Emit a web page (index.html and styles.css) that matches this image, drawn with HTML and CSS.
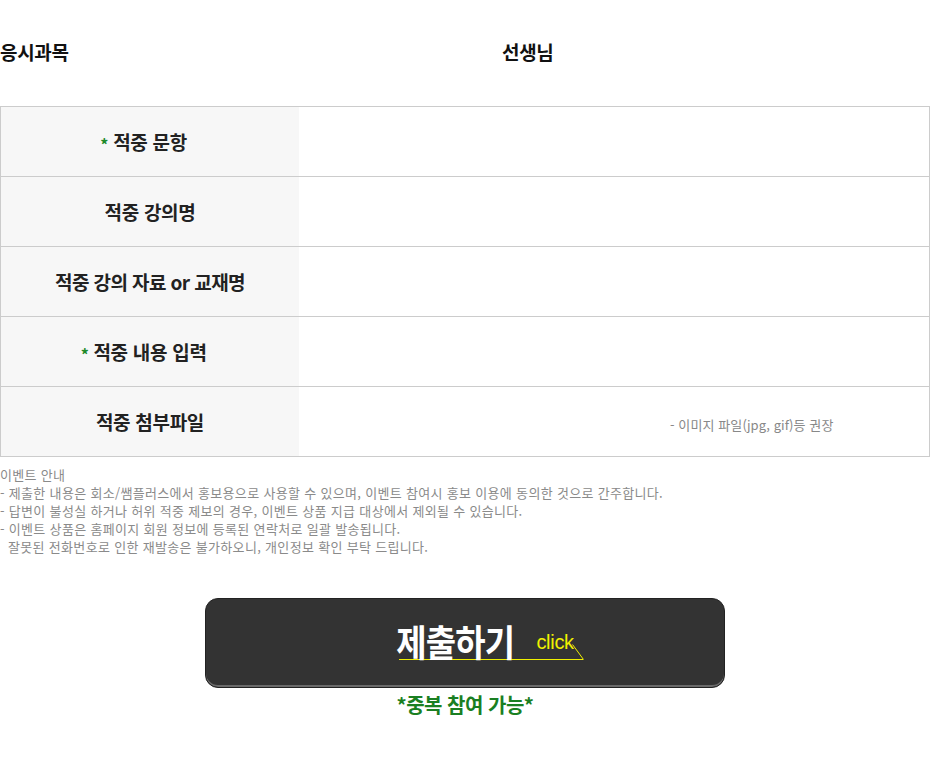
FILE: index.html
```html
<!DOCTYPE html>
<html lang="ko">
<head>
<meta charset="utf-8">
<link rel="stylesheet" href="styles.css">
</head>
<body>
<div class="page">
  <div class="head-row">
    <div class="head-item">응시과목</div>
    <div class="head-item">선생님</div>
  </div>

  <div class="form-table">
    <div class="row">
      <div class="label"><span class="label-text"><span class="req">*</span>적중 문항</span></div>
      <div class="field"></div>
    </div>
    <div class="row">
      <div class="label"><span class="label-text">적중 강의명</span></div>
      <div class="field"></div>
    </div>
    <div class="row">
      <div class="label"><span class="label-text tight">적중 강의 자료 or 교재명</span></div>
      <div class="field"></div>
    </div>
    <div class="row">
      <div class="label"><span class="label-text"><span class="req">*</span>적중 내용 입력</span></div>
      <div class="field"></div>
    </div>
    <div class="row">
      <div class="label"><span class="label-text">적중 첨부파일</span></div>
      <div class="field field-note"><span class="note">- 이미지 파일(jpg, gif)등 권장</span></div>
    </div>
  </div>

  <div class="notice">
    <p>이벤트 안내</p>
    <p>- 제출한 내용은 회소/쌤플러스에서 홍보용으로 사용할 수 있으며, 이벤트 참여시 홍보 이용에 동의한 것으로 간주합니다.</p>
    <p>- 답변이 불성실 하거나 허위 적중 제보의 경우, 이벤트 상품 지급 대상에서 제외될 수 있습니다.</p>
    <p>- 이벤트 상품은 홈페이지 회원 정보에 등록된 연락처로 일괄 발송됩니다.</p>
    <p class="indent">잘못된 전화번호로 인한 재발송은 불가하오니, 개인정보 확인 부탁 드립니다.</p>
  </div>

  <div class="submit-wrap">
    <div class="submit-btn">
      <span class="submit-inner">
        <span class="submit-text">제출하기</span>
        <span class="click">click</span>
        <svg class="click-line" width="12" height="16" viewBox="0 0 12 16"><line x1="0.5" y1="0.5" x2="11.5" y2="15.5" stroke="#f0f000" stroke-width="1"/></svg>
      </span>
    </div>
    <div class="dup">*중복 참여 가능*</div>
  </div>
</div>
</body>
</html>
```

FILE: styles.css
```css
html, body {
  margin: 0;
  padding: 0;
  background: #fff;
}
body {
  font-family: "Noto Sans CJK KR", "Noto Sans", sans-serif;
  color: #111;
}
.page {
  width: 930px;
}
.head-row {
  display: grid;
  grid-template-columns: 502px 1fr;
  padding-top: 40px;
  height: 106px;
  box-sizing: border-box;
}
.head-item {
  font-size: 19px;
  font-weight: 700;
  line-height: 24px;
  letter-spacing: -0.3px;
  color: #111;
}
.form-table {
  border: 1px solid #cccccc;
  border-bottom: none;
}
.row {
  display: flex;
  height: 69px;
  border-bottom: 1px solid #cccccc;
}
.label {
  width: 298px;
  background: #f7f7f7;
  display: flex;
  align-items: center;
  justify-content: center;
  font-size: 19px;
  font-weight: 700;
  letter-spacing: -0.3px;
  color: #222;
}
.label-text {
  position: relative;
}
.label-text.tight {
  letter-spacing: -0.6px;
}
.req {
  position: absolute;
  right: 100%;
  margin-right: 5px;
  top: 4px;
  color: #1e8a2a;
  font-size: 16px;
}
.field {
  flex: 1;
}
.field-note {
  display: flex;
  align-items: center;
  padding-left: 371px;
  padding-top: 5px;
}
.note {
  font-size: 13px;
  color: #888;
  letter-spacing: 0.1px;
}
.notice {
  margin-top: 9px;
  font-size: 13px;
  line-height: 18px;
  color: #8a8a8a;
  letter-spacing: 0.32px;
}
.notice p {
  margin: 0;
}
.notice .indent {
  padding-left: 8px;
}
.submit-wrap {
  display: flex;
  flex-direction: column;
  align-items: center;
  margin-top: 42px;
}
.submit-btn {
  width: 520px;
  height: 90px;
  box-sizing: border-box;
  background: #333333;
  border: 1px solid #222;
  border-radius: 13px;
  box-shadow: inset 0 -2px 0 #6a6a6a, inset 0 -1px 0 #222;
  display: flex;
  justify-content: center;
  align-items: flex-start;
}
.submit-inner {
  position: relative;
  display: inline-flex;
  align-items: flex-end;
  margin-top: 22px;
  padding-right: 9px;
  height: 38px;
  border-bottom: 1px solid #f0f000;
  margin-left: 52px;
}
.submit-text {
  display: inline-block;
  font-size: 33px;
  font-weight: 700;
  color: #fff;
  letter-spacing: -0.8px;
  line-height: 38px;
  transform: scaleY(1.12);
  transform-origin: bottom;
  margin-bottom: -4px;
  margin-left: -3px;
}
.click {
  font-family: "Liberation Sans", Arial, sans-serif;
  font-size: 20px;
  color: #f0f000;
  letter-spacing: -0.3px;
  line-height: 24px;
  margin-left: 22px;
  margin-bottom: 5px;
}
.click-line {
  position: absolute;
  right: -1px;
  bottom: -1px;
}
.dup {
  margin-top: 2px;
  font-size: 20px;
  font-weight: 700;
  color: #1a7f22;
  letter-spacing: -0.5px;
  line-height: 30px;
}
```
